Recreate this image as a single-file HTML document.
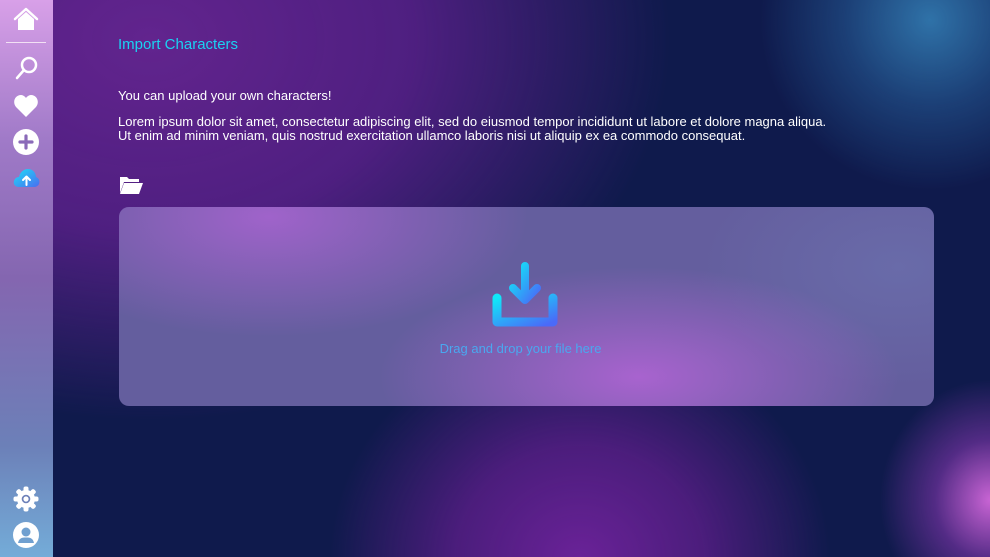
<!DOCTYPE html>
<html><head><meta charset="utf-8"><style>
*{margin:0;padding:0;box-sizing:border-box}
body{width:990px;height:557px;overflow:hidden;position:relative;font-family:"Liberation Sans",sans-serif;
background:
radial-gradient(ellipse 110px 120px at 990px 500px,#c864d4 0%,rgba(150,60,190,.5) 50%,rgba(0,0,0,0) 100%),
radial-gradient(ellipse 170px 170px at 930px 20px,#2f72a8 0%,rgba(40,100,160,.5) 50%,rgba(0,0,0,0) 100%),
radial-gradient(ellipse 250px 230px at 580px 560px,#6a2298 0%,rgba(95,30,140,.75) 50%,rgba(0,0,0,0) 100%),
radial-gradient(ellipse 520px 380px at 150px 40px,#62248e 0%,rgba(90,32,138,.85) 50%,rgba(0,0,0,0) 100%),
#0f1a4c;}
.side{position:absolute;left:0;top:0;width:53px;height:557px;background:linear-gradient(180deg,#d8a0e8 0%,#a07ac8 25%,#8466b0 50%,#6c80b8 80%,#74acd8 100%)}
.ic{position:absolute;left:12px}
.t{position:absolute;color:#fff;font-size:13px;line-height:14px}
.drop{position:absolute;left:119px;top:207px;width:815px;height:199px;border-radius:10px;overflow:hidden;background:#645e9e}
.drop:before{content:"";position:absolute;inset:0;background:
radial-gradient(ellipse 260px 120px at 150px 10px,rgba(170,100,210,.85) 0%,rgba(0,0,0,0) 100%),
radial-gradient(ellipse 260px 110px at 520px 170px,rgba(180,100,215,.85) 0%,rgba(0,0,0,0) 100%),
radial-gradient(ellipse 200px 120px at 780px 60px,rgba(110,120,180,.5) 0%,rgba(0,0,0,0) 100%)}
</style></head><body>
<div class="side">
<svg class="ic" style="top:7px;left:13px" width="26" height="24" viewBox="0 0 26 24"><path d="M2 12 L13 2 L24 12" fill="none" stroke="#fff" stroke-width="2.5" stroke-linecap="round" stroke-linejoin="round"/><path d="M5 12 L13 5 L21 12 V23 H5Z" fill="#fff"/></svg>
<div style="position:absolute;left:6px;top:42px;width:40px;height:1px;background:#f2e0f4"></div>
<svg class="ic" style="top:55px;left:14px" width="26" height="26" viewBox="0 0 26 26"><circle cx="15" cy="10" r="7" fill="none" stroke="#fff" stroke-width="2.5"/><path d="M10 15 L3 23" stroke="#fff" stroke-width="2.5" stroke-linecap="round"/></svg>
<svg class="ic" style="top:94px;left:13px" width="26" height="24" viewBox="0 0 26 24"><path d="M13 23 L3 13 C-1 8 2 1 8 1 C11 1 13 4 13 4 C13 4 15 1 18 1 C24 1 27 8 23 13Z" fill="#fff"/></svg>
<svg class="ic" style="top:129px;left:13px" width="26" height="26" viewBox="0 0 26 26"><circle cx="13" cy="13" r="13" fill="#fff"/><path d="M13 7 V19 M7 13 H19" stroke="#8a6ab8" stroke-width="3.2" stroke-linecap="round"/></svg>
<svg class="ic" style="top:168px;left:13px" width="27" height="20" viewBox="0 0 27 20"><defs><linearGradient id="cg" x1="0" y1="0" x2="1" y2="1"><stop offset="0" stop-color="#1ee0f8"/><stop offset="1" stop-color="#4a6cf0"/></linearGradient></defs><path d="M6 19 C2 19 0 16 1 13 C2 10 4 9 6 9 C7 4 11 1 15 1 C20 1 23 5 23 9 C26 10 27 13 26 16 C25 18 23 19 21 19Z" fill="url(#cg)"/><path d="M13.5 17 V9 M10 12 L13.5 8.5 L17 12" stroke="#fff" stroke-width="2" fill="none" stroke-linecap="round" stroke-linejoin="round"/></svg>
<svg class="ic" style="top:486px;left:13px" width="26" height="26" viewBox="0 0 26 26"><g fill="#fff"><circle cx="13" cy="13" r="9"/><g id="tt"><rect x="10.5" y="0.5" width="5" height="6" rx="2"/></g><use href="#tt" transform="rotate(45 13 13)"/><use href="#tt" transform="rotate(90 13 13)"/><use href="#tt" transform="rotate(135 13 13)"/><use href="#tt" transform="rotate(180 13 13)"/><use href="#tt" transform="rotate(225 13 13)"/><use href="#tt" transform="rotate(270 13 13)"/><use href="#tt" transform="rotate(315 13 13)"/></g><circle cx="13" cy="13" r="4.3" fill="#6c80b8"/><circle cx="13" cy="13" r="2.6" fill="#fff"/></svg>
<svg class="ic" style="top:522px;left:13px" width="26" height="26" viewBox="0 0 26 26"><circle cx="13" cy="13" r="13" fill="#fff"/><circle cx="13" cy="10" r="4.5" fill="#70a0d0"/><path d="M5 21 C6 16 9 15.5 13 15.5 C17 15.5 20 16 21 21Z" fill="#70a0d0"/></svg>
</div>
<div class="t" style="left:118px;top:36px;font-size:15px;line-height:17px;color:#1ad2f2">Import Characters</div>
<div class="t" style="left:118px;top:89px">You can upload your own characters!</div>
<div class="t" style="left:118px;top:115px">Lorem ipsum dolor sit amet, consectetur adipiscing elit, sed do eiusmod tempor incididunt ut labore et dolore magna aliqua.<br>Ut enim ad minim veniam, quis nostrud exercitation ullamco laboris nisi ut aliquip ex ea commodo consequat.</div>
<svg style="position:absolute;left:119px;top:175px" width="25" height="20" viewBox="0 0 25 20"><path d="M1 2 H8 L10 4 H20 V7 H5 L1 18Z" fill="#fff"/><path d="M5 8 H24 L20 19 H1Z" fill="#fff"/></svg>
<div class="drop"></div>
<svg style="position:absolute;left:492px;top:262px" width="66" height="65" viewBox="0 0 66 65"><defs><linearGradient id="dg" x1="0" y1="0" x2="1" y2="1"><stop offset="0" stop-color="#10e8f8"/><stop offset="1" stop-color="#4a6af8"/></linearGradient></defs><path d="M33 4 V38 M21 26 L33 38 L45 26" stroke="url(#dg)" stroke-width="8" fill="none" stroke-linecap="round" stroke-linejoin="round"/><path d="M5 36 V60 H61 V36" stroke="url(#dg)" stroke-width="9" fill="none" stroke-linecap="round" stroke-linejoin="round"/></svg>
<div class="t" style="left:0;width:1041px;text-align:center;top:342px;color:#4aa8f0;font-size:13px">Drag and drop your file here</div>
</body></html>
